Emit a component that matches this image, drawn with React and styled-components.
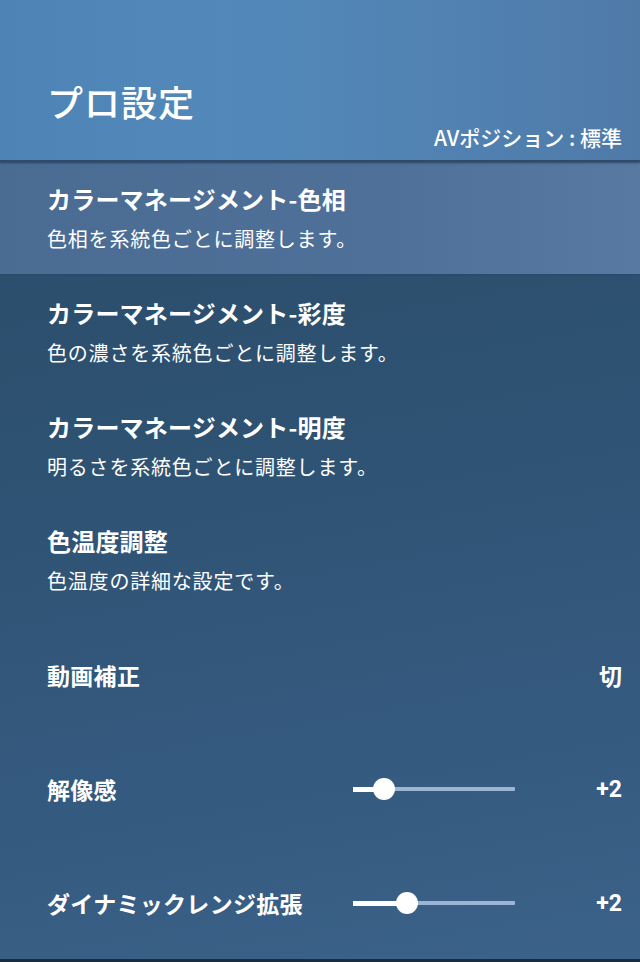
import styled, { createGlobalStyle } from "styled-components";

const GlobalStyle = createGlobalStyle`
  html, body {
    margin: 0;
    padding: 0;
    background: #2d4f6f;
  }
  * {
    box-sizing: border-box;
  }
`;

const Screen = styled.div`
  width: 640px;
  height: 962px;
  overflow: hidden;
  display: flex;
  flex-direction: column;
  font-family: "Noto Sans CJK JP", "Noto Sans", sans-serif;
  color: #ffffff;
  background: linear-gradient(170deg, #2a4a68 0%, #2e5272 45%, #365b81 80%, #3b6289 100%);
  border-bottom: 3px solid #1b2c3e;
`;

const Header = styled.div`
  height: 162px;
  flex-shrink: 0;
  padding: 0 18px 0 47px;
  display: flex;
  flex-direction: column;
  justify-content: flex-end;
  background: linear-gradient(90deg, #4d84b5 0%, #5289ba 35%, #5182b2 70%, #4f7aa8 100%);
  border-bottom: 2px solid #2e4b6c;
  box-shadow: 0 1px 2px rgba(10, 25, 45, 0.5);
  position: relative;
  z-index: 1;
`;

const Title = styled.h1`
  margin: 0;
  font-size: 36px;
  font-weight: 500;
  line-height: 40px;
  letter-spacing: 1px;
  margin-bottom: 3px;
`;

const Position = styled.div`
  align-self: flex-end;
  font-size: 21px;
  font-weight: 500;
  line-height: 26px;
  margin: 0 0 10px;
`;

const List = styled.div`
  display: flex;
  flex-direction: column;
`;

const Item = styled.div`
  height: 114px;
  padding: 22px 18px 0 47px;
  display: flex;
  flex-direction: column;
  gap: 10px;
  background: ${(p) =>
    p.active ? "linear-gradient(90deg, #4a6b92 0%, #4f7199 60%, #587aa2 100%)" : "transparent"};
  border-bottom: ${(p) => (p.active ? "2px solid #2c4b6a" : "none")};
`;

const ItemTitle = styled.div`
  font-size: 24px;
  font-weight: 700;
  line-height: 30px;
  letter-spacing: 0.2px;
`;

const ItemSub = styled.div`
  font-size: 20px;
  font-weight: 400;
  line-height: 30px;
  letter-spacing: 0.8px;
`;

const Row = styled.div`
  height: 114px;
  padding: 0 18px 0 47px;
  display: grid;
  grid-template-columns: 1fr 162px 107px;
  align-items: center;
`;

const Label = styled.div`
  font-size: 23px;
  font-weight: 700;
  letter-spacing: 0.3px;
  grid-column: 1;
`;

const Value = styled.div`
  grid-column: 3;
  justify-self: end;
  font-size: 23px;
  font-weight: 700;
  font-family: "Roboto", "Noto Sans CJK JP", sans-serif;
`;

const Track = styled.div`
  grid-column: 2;
  position: relative;
  height: 22px;
  display: flex;
  align-items: center;
`;

const Rail = styled.div`
  width: 100%;
  height: 4px;
  background: #9db5d5;
  border-radius: 1px;
`;

const Fill = styled.div`
  position: absolute;
  left: 0;
  top: 9px;
  height: 5px;
  background: #ffffff;
`;

const Thumb = styled.div`
  position: absolute;
  top: 0;
  width: 22px;
  height: 22px;
  margin-left: -11px;
  border-radius: 50%;
  background: #ffffff;
`;

const Slider = ({ pos }) => (
  <Track>
    <Rail />
    <Fill style={{ width: `${pos}px` }} />
    <Thumb style={{ left: `${pos}px` }} />
  </Track>
);

const items = [
  { title: "カラーマネージメント-色相", sub: "色相を系統色ごとに調整します。" },
  { title: "カラーマネージメント-彩度", sub: "色の濃さを系統色ごとに調整します。" },
  { title: "カラーマネージメント-明度", sub: "明るさを系統色ごとに調整します。" },
  { title: "色温度調整", sub: "色温度の詳細な設定です。" },
];

export default function App() {
  return (
    <>
      <GlobalStyle />
      <Screen>
        <Header>
          <Title>プロ設定</Title>
          <Position>AVポジション : 標準</Position>
        </Header>
        <List>
          {items.map((it, i) => (
            <Item key={it.title} active={i === 0}>
              <ItemTitle>{it.title}</ItemTitle>
              <ItemSub>{it.sub}</ItemSub>
            </Item>
          ))}
          <Row>
            <Label>動画補正</Label>
            <Value>切</Value>
          </Row>
          <Row>
            <Label>解像感</Label>
            <Slider pos={31} />
            <Value>+2</Value>
          </Row>
          <Row>
            <Label>ダイナミックレンジ拡張</Label>
            <Slider pos={54} />
            <Value>+2</Value>
          </Row>
        </List>
      </Screen>
    </>
  );
}
